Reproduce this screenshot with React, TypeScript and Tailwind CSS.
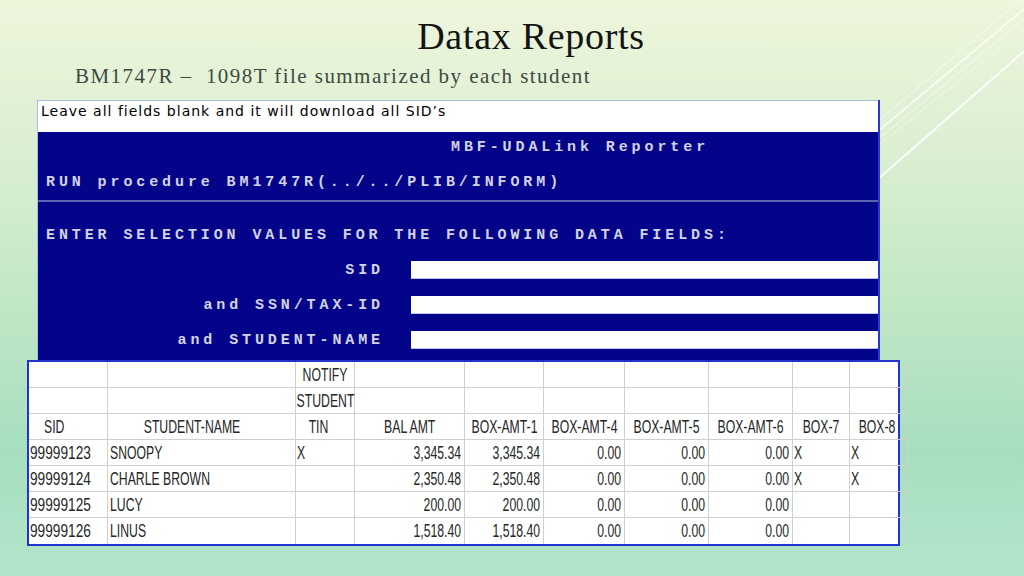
const term = "font-['Liberation_Mono',monospace] font-bold text-[15px] tracking-[3.9px] text-[#d2d3e4] whitespace-pre leading-none";
const cell = "border-r border-b border-[#cfcfcf] flex items-center h-[26px] whitespace-nowrap";

const rows = [
  ['99999123', 'SNOOPY', 'X', '3,345.34', '3,345.34', '0.00', '0.00', '0.00', 'X', 'X'],
  ['99999124', 'CHARLE BROWN', '', '2,350.48', '2,350.48', '0.00', '0.00', '0.00', 'X', 'X'],
  ['99999125', 'LUCY', '', '200.00', '200.00', '0.00', '0.00', '0.00', '', ''],
  ['99999126', 'LINUS', '', '1,518.40', '1,518.40', '0.00', '0.00', '0.00', '', ''],
];

const headers = ['SID', 'STUDENT-NAME', 'TIN', 'BAL AMT', 'BOX-AMT-1', 'BOX-AMT-4', 'BOX-AMT-5', 'BOX-AMT-6', 'BOX-7', 'BOX-8'];

// narrow spreadsheet text: Liberation Sans squeezed horizontally
function Txt({ children, align, wide }: { children: string; align: 'left' | 'right' | 'center'; wide?: boolean }) {
  const origin = align === 'left' ? 'origin-left' : align === 'right' ? 'origin-right' : 'origin-center';
  return <span className={`inline-block shrink-0 ${wide ? 'scale-x-[0.76]' : 'scale-x-[0.68]'} ${origin}`}>{children}</span>;
}

function Field({ label }: { label: string }) {
  return (
    <div className="flex items-center h-[30px] mt-[5px]">
      <div className={`${term} w-[346px] text-right`}>{label}</div>
      <div className="ml-[27px] flex-1 h-[18px] bg-white border-b border-[#b8c4ee]" />
    </div>
  );
}

export default function App() {
  return (
    <div className="relative w-[1024px] h-[576px] overflow-hidden bg-[linear-gradient(180deg,#eef6dc_0%,#dcefd2_25%,#c4e8c6_50%,#a6dfbf_78%,#b2e5cb_100%)]">
      {/* decorative lines top right */}
      <svg className="absolute inset-0 pointer-events-none" width="1024" height="576">
        <line x1="1030" y1="-8" x2="870" y2="128" stroke="#ffffff" strokeWidth="0.8" opacity="0.9" />
        <line x1="1030" y1="4" x2="870" y2="138" stroke="#ffffff" strokeWidth="1.6" opacity="0.95" />
        <line x1="1030" y1="14" x2="870" y2="146" stroke="#ffffff" strokeWidth="0.8" opacity="0.8" />
        <line x1="1030" y1="24" x2="870" y2="152" stroke="#ffffff" strokeWidth="0.7" opacity="0.7" />
        <line x1="1030" y1="46" x2="870" y2="186" stroke="#ffffff" strokeWidth="2" opacity="0.95" />
      </svg>

      <div className="relative flex flex-col">
        <div className="mt-[17px] h-[36px] flex justify-center pl-[38px] font-['Liberation_Serif',serif] text-[38px] leading-none text-[#141414] tracking-[0.7px]">
          Datax Reports
        </div>
        <div className="mt-[13px] h-[21px] pl-[75px] font-['Liberation_Serif',serif] text-[21px] leading-none text-[#3e4a3f] tracking-[1.45px] whitespace-pre">
          BM1747R –  1098T file summarized by each student
        </div>

        {/* reporter screen */}
        <div className="mt-[13px] ml-[37px] w-[843px] border-r-2 border-[#2a38d0]">
          <div className="h-[32px] bg-white border-t border-l border-[#a9bde8] pl-[3px] font-['DejaVu_Sans',sans-serif] text-[14px] tracking-[1px] text-black">
            Leave all fields blank and it will download all SID’s
          </div>
          <div className="h-[228px] bg-[#04048a] border-l border-[#a9bde8]">
            <div className="h-[30px] flex items-center pl-[413px]">
              <span className={term}>MBF-UDALink Reporter</span>
            </div>
            <div className="h-[30px] mt-[5px] flex items-center pl-[8px]">
              <span className={term}>RUN procedure BM1747R(../../PLIB/INFORM)</span>
            </div>
            <div className="mt-[3px] h-[2px] bg-[#5867b0]" />
            <div className="h-[30px] mt-[18px] flex items-center pl-[8px]">
              <span className={term}>ENTER SELECTION VALUES FOR THE FOLLOWING DATA FIELDS:</span>
            </div>
            <Field label="SID" />
            <Field label="and SSN/TAX-ID" />
            <Field label="and STUDENT-NAME" />
          </div>
        </div>

        {/* spreadsheet */}
        <div className="ml-[27px] w-[873px] bg-white border-2 border-[#2233cc] font-['Liberation_Sans',sans-serif] text-[18px] text-[#262626] leading-none">
          <div className="grid grid-cols-[79px_188px_59px_110px_79px_81px_84px_84px_57px_1fr]">
            {Array.from({ length: 10 }).map((_, i) => (
              <div key={'a' + i} className={`${cell} justify-center`}>
                {i === 2 ? <Txt align="center">NOTIFY</Txt> : null}
              </div>
            ))}
            {Array.from({ length: 10 }).map((_, i) => (
              <div key={'b' + i} className={`${cell} justify-center`}>
                {i === 2 ? <Txt align="center">STUDENT</Txt> : null}
              </div>
            ))}
            {headers.map((h, i) => (
              <div
                key={h}
                className={`${cell} ${i === 0 ? 'justify-start pl-[15px]' : i === 1 ? 'justify-center pr-[18px]' : i === 2 ? 'justify-center pr-[14px]' : i === 9 ? 'justify-center pr-[3px]' : 'justify-center'}`}
              >
                <Txt align={i === 0 ? 'left' : 'center'}>{h}</Txt>
              </div>
            ))}
            {rows.map((r, ri) =>
              r.map((v, i) => {
                const right = i >= 3 && i <= 7;
                return (
                  <div
                    key={ri + '-' + i}
                    className={`${cell} ${ri === rows.length - 1 ? 'border-b-0' : ''} ${right ? 'justify-end pr-[3px]' : i === 1 ? 'pl-[2px]' : 'pl-[1px]'}`}
                  >
                    {v ? <Txt align={right ? 'right' : 'left'} wide={i === 0}>{v}</Txt> : null}
                  </div>
                );
              })
            )}
          </div>
        </div>
      </div>
    </div>
  );
}
